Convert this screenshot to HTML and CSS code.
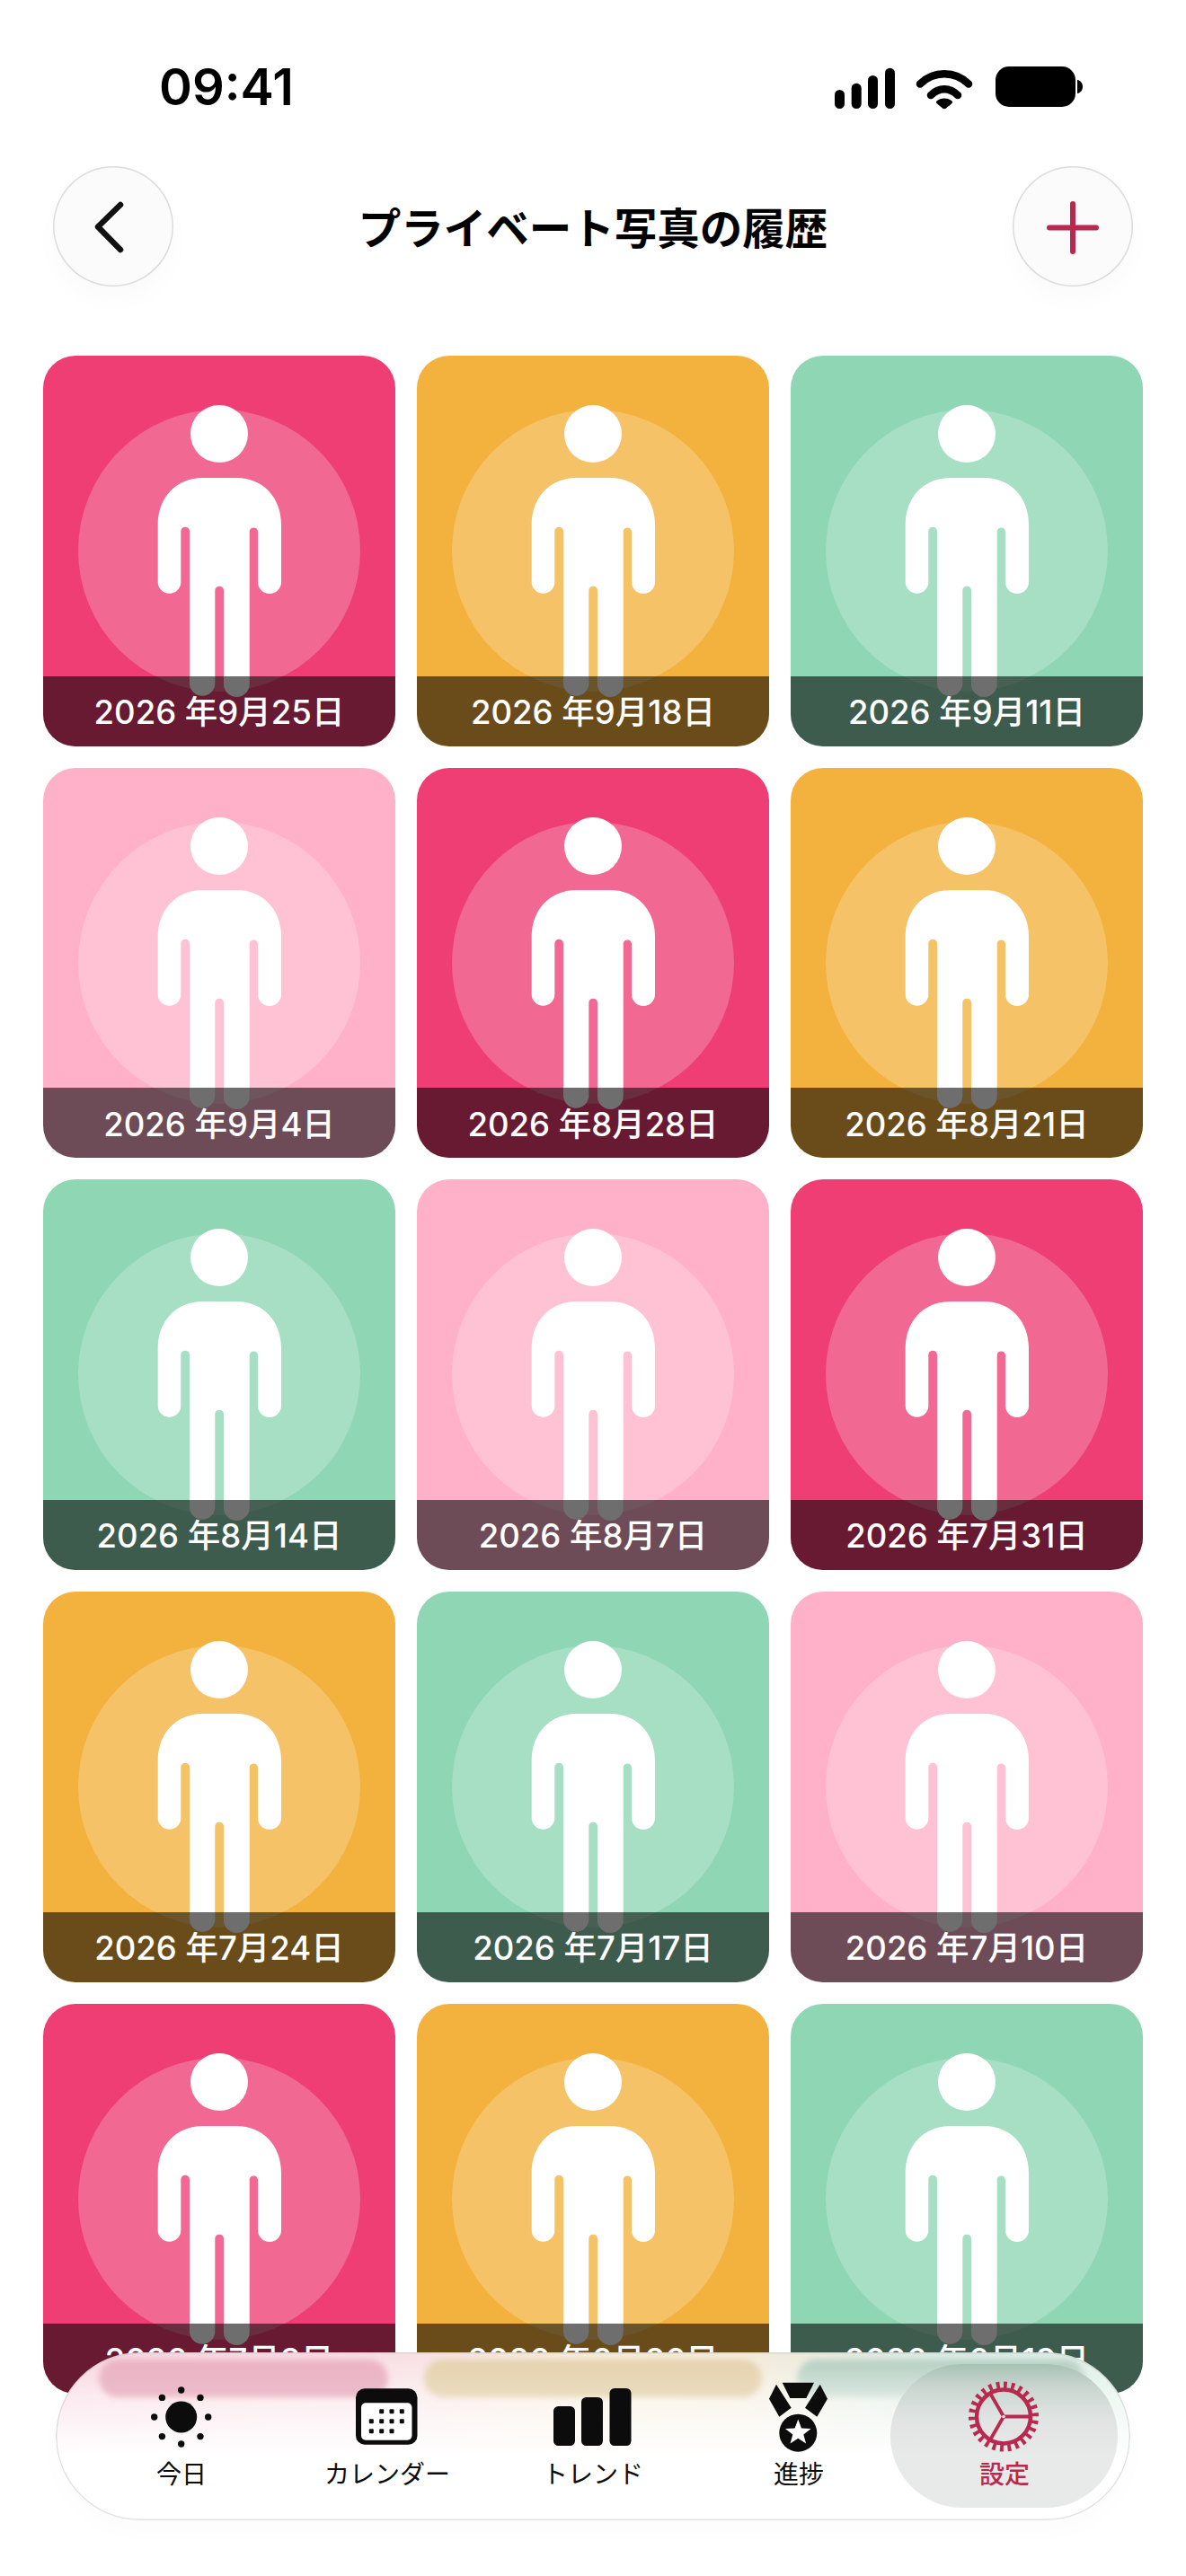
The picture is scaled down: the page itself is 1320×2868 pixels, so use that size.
FILE: index.html
```html
<!DOCTYPE html>
<html lang="ja">
<head>
  <meta charset="UTF-8" />
  <meta name="viewport" content="width=device-width, initial-scale=1.0"/>
  <title>プライベート写真の履歴</title>
  <link rel="stylesheet" href="styles.css">
</head>
<body>
  <svg class="defs" width="0" height="0" aria-hidden="true">
    <symbol id="person" viewBox="0 0 392 434">
      <circle cx="196" cy="217" r="157" fill="#fff" fill-opacity="0.22"/>
      <circle cx="196" cy="87" r="32" fill="#fff"/>
      <path fill="#fff" d="M177.700 136H215C245 136 265 158 265 188V252A13 13 0 0 1 239 252V195.500A4.700 4.700 0 0 0 229.700 195.500V365.700A14.300 14.300 0 0 1 201 365.700V261.500A4.800 4.800 0 0 0 191.300 261.500V365.700A14.200 14.200 0 0 1 163 365.700V195.500A4.800 4.800 0 0 0 153.300 195.500V252A12.800 12.800 0 0 1 127.700 252V188C127.700 158 148 136 177.700 136Z"/>
    </symbol>
  </svg>

  <div class="screen">
    <div class="status-bar">
      <span class="clock">09:41</span>
      <svg class="status-icons" width="276" height="46" viewBox="0 0 276 46">
        <rect x="0" y="26" width="11" height="21" rx="5.5"/>
        <rect x="18.7" y="18.7" width="11" height="28.3" rx="5.5"/>
        <rect x="37" y="10" width="11" height="37" rx="5.5"/>
        <rect x="56" y="1.7" width="11" height="45.3" rx="5.5"/>
        <path class="wifi" d="M95 19.5C110 4.5 134 4.5 149 19.5"/>
        <path class="wifi" d="M107 32C116 23 128 23 137 32"/>
        <path d="M113.500 38.500C118 34.500 126 34.500 130.500 38.500C131.500 39.500 131 40.500 130 41.500L124 46.500C122.800 47.500 121.200 47.500 120 46.500L114 41.500C113 40.500 112.500 39.500 113.500 38.500Z"/>
        <rect x="179" y="0" width="89" height="45" rx="15"/>
        <path d="M270 15C274 15.500 276 19 276 22.500C276 26 274 29.500 270 30Z"/>
      </svg>
    </div>

    <header class="top-bar">
      <button class="round-btn" aria-label="戻る">
        <svg width="134" height="134" viewBox="0 0 134 134"><path class="chevron" d="M75 43L50 67.500L75 93"/></svg>
      </button>
      <h1 class="page-title">プライベート写真の履歴</h1>
      <button class="round-btn" aria-label="追加">
        <svg width="134" height="134" viewBox="0 0 134 134"><path class="plus" d="M67 42V95M41 68.500H93"/></svg>
      </button>
    </header>

    <main class="photo-grid">
      <div class="photo pink"><svg class="figure"><use href="#person"/></svg><div class="caption">2026 年9月25日</div></div>
      <div class="photo orange"><svg class="figure"><use href="#person"/></svg><div class="caption">2026 年9月18日</div></div>
      <div class="photo green"><svg class="figure"><use href="#person"/></svg><div class="caption">2026 年9月11日</div></div>
      <div class="photo rose"><svg class="figure"><use href="#person"/></svg><div class="caption">2026 年9月4日</div></div>
      <div class="photo pink"><svg class="figure"><use href="#person"/></svg><div class="caption">2026 年8月28日</div></div>
      <div class="photo orange"><svg class="figure"><use href="#person"/></svg><div class="caption">2026 年8月21日</div></div>
      <div class="photo green"><svg class="figure"><use href="#person"/></svg><div class="caption">2026 年8月14日</div></div>
      <div class="photo rose"><svg class="figure"><use href="#person"/></svg><div class="caption">2026 年8月7日</div></div>
      <div class="photo pink"><svg class="figure"><use href="#person"/></svg><div class="caption">2026 年7月31日</div></div>
      <div class="photo orange"><svg class="figure"><use href="#person"/></svg><div class="caption">2026 年7月24日</div></div>
      <div class="photo green"><svg class="figure"><use href="#person"/></svg><div class="caption">2026 年7月17日</div></div>
      <div class="photo rose"><svg class="figure"><use href="#person"/></svg><div class="caption">2026 年7月10日</div></div>
      <div class="photo pink"><svg class="figure"><use href="#person"/></svg><div class="caption">2026 年7月3日</div></div>
      <div class="photo orange"><svg class="figure"><use href="#person"/></svg><div class="caption">2026 年6月26日</div></div>
      <div class="photo green"><svg class="figure"><use href="#person"/></svg><div class="caption">2026 年6月19日</div></div>
    </main>

    <nav class="tab-bar">
      <div class="blob blob-pink"></div>
      <div class="blob blob-tan"></div>
      <div class="blob blob-green"></div>

      <div class="tab">
        <svg width="88" height="88" viewBox="0 0 88 88">
          <circle cx="43.700" cy="44" r="17.500"/>
          <circle cx="43.700" cy="14" r="3.700"/><circle cx="43.700" cy="74" r="3.700"/>
          <circle cx="13.700" cy="44" r="3.700"/><circle cx="73.700" cy="44" r="3.700"/>
          <circle cx="22.400" cy="22.400" r="3.700"/><circle cx="65" cy="22.400" r="3.700"/>
          <circle cx="22.400" cy="65.600" r="3.700"/><circle cx="65" cy="65.600" r="3.700"/>
        </svg>
        <span>今日</span>
      </div>

      <div class="tab">
        <svg width="88" height="88" viewBox="0 0 88 88">
          <rect x="9" y="12.300" width="68.500" height="62.500" rx="10"/>
          <rect x="15" y="28.300" width="56.500" height="41.500" rx="5" fill="#fff"/>
          <g class="cal-dots">
            <rect x="35.200" y="35.200" width="5" height="5" rx="1"/><rect x="46.500" y="35.200" width="5" height="5" rx="1"/><rect x="57.800" y="35.200" width="5" height="5" rx="1"/>
            <rect x="23.800" y="46.200" width="5" height="5" rx="1"/><rect x="35.200" y="46.200" width="5" height="5" rx="1"/><rect x="46.500" y="46.200" width="5" height="5" rx="1"/><rect x="57.800" y="46.200" width="5" height="5" rx="1"/>
            <rect x="23.800" y="57.200" width="5" height="5" rx="1"/><rect x="35.200" y="57.200" width="5" height="5" rx="1"/><rect x="46.500" y="57.200" width="5" height="5" rx="1"/>
          </g>
        </svg>
        <span>カレンダー</span>
      </div>

      <div class="tab">
        <svg width="88" height="88" viewBox="0 0 88 88">
          <rect x="0" y="32" width="24" height="44" rx="5.500"/>
          <rect x="31" y="22" width="24" height="54" rx="5.500"/>
          <rect x="62.500" y="12" width="24" height="64" rx="5.500"/>
        </svg>
        <span>トレンド</span>
      </div>

      <div class="tab">
        <svg width="88" height="88" viewBox="0 0 88 88">
          <path d="M25.700 5.700H61L52.300 23H34.300Z"/>
          <path d="M19 7.700L11 23.700L22.300 43.700L35.700 33.700Z"/>
          <path d="M67.700 7.700L76 23.700L64.300 43.700L51 33.700Z"/>
          <circle cx="43.300" cy="61.700" r="21"/>
          <path fill="#fff" d="M43.300 46.500L47 56.400L57.600 56.900L49.300 63.400L52.100 73.600L43.300 67.800L34.500 73.600L37.300 63.400L29 56.900L39.600 56.400Z"/>
        </svg>
        <span>進捗</span>
      </div>

      <div class="tab active">
        <svg width="88" height="88" viewBox="0 0 88 88">
          <circle class="gear-teeth" cx="43" cy="43.500" r="35"/>
          <circle class="gear-ring" cx="43" cy="43.500" r="30"/>
          <path class="gear-spokes" d="M43 43.500H72M43 43.500L28 17.500M43 43.500L28 69.500"/>
          <circle cx="43" cy="43.500" r="1.800" fill="#f3dfe4"/>
        </svg>
        <span>設定</span>
      </div>
    </nav>
  </div>
</body>
</html>
```

FILE: styles.css
```css
* {
  margin: 0;
  padding: 0;
  box-sizing: border-box;
}

body {
  background: #fff;
  font-family: "Noto Sans CJK JP", "Noto Sans", sans-serif;
  color: #0c0c0c;
}

.defs {
  display: block;
  height: 0;
}

.screen {
  position: relative;
  width: 1320px;
  height: 2868px;
  overflow: hidden;
  background: #fff;
}

/* status bar */
.status-bar {
  height: 185px;
  padding: 74px 115px 0 177px;
  display: flex;
  justify-content: space-between;
  align-items: flex-start;
}

.clock {
  font-family: Inter, "Liberation Sans", sans-serif;
  font-size: 56px;
  font-weight: 600;
  line-height: 46px;
  color: #000;
}

.status-icons {
  overflow: visible;
}

.wifi {
  fill: none;
  stroke: #000;
  stroke-width: 8.5;
  stroke-linecap: round;
}

/* header */
.top-bar {
  height: 134px;
  padding: 0 59px;
  margin-bottom: 77px;
  display: flex;
  justify-content: space-between;
  align-items: center;
}

.round-btn {
  width: 134px;
  height: 134px;
  border: none;
  border-radius: 50%;
  background: #fbfbfb;
  box-shadow: inset 0 0 0 1.5px #dcdcdc, 0 16px 30px rgba(0, 0, 0, 0.02);
}

.round-btn svg {
  display: block;
}

.chevron {
  fill: none;
  stroke: #111;
  stroke-width: 6.5;
  stroke-linecap: round;
  stroke-linejoin: round;
}

.plus {
  fill: none;
  stroke: #b8294f;
  stroke-width: 6;
  stroke-linecap: round;
}

.page-title {
  font-size: 47.5px;
  font-weight: 700;
  line-height: 60px;
  color: #000;
}

/* photo grid */
.photo-grid {
  padding: 0 48px;
  display: grid;
  grid-template-columns: repeat(3, 392px);
  grid-auto-rows: 434.67px;
  gap: 24px;
}

.photo {
  position: relative;
  overflow: hidden;
  border-radius: 36px;
}

.pink { background: #ee3e74; }
.orange { background: #f3b13d; }
.green { background: #8ed6b4; }
.rose { background: #ffb1c9; }

.figure {
  display: block;
  width: 392px;
  height: 434px;
}

.caption {
  position: absolute;
  left: 0;
  right: 0;
  bottom: 0;
  height: 78px;
  padding-bottom: 2px;
  display: flex;
  align-items: center;
  justify-content: center;
  background: rgba(0, 0, 0, 0.57);
  color: #fff;
  font-family: Inter, "Noto Sans CJK JP", sans-serif;
  font-size: 36.5px;
  font-weight: 500;
  white-space: pre;
}

/* glass tab bar */
.tab-bar {
  position: absolute;
  left: 62px;
  top: 2619px;
  width: 1196px;
  height: 187px;
  padding: 28px 25.5px 0;
  display: grid;
  grid-template-columns: repeat(5, 229px);
  border-radius: 93.5px;
  overflow: hidden;
  background:
    linear-gradient(to bottom, rgba(255, 255, 255, 0) 0, rgba(255, 255, 255, 0.55) 50px, #fff 115px),
    linear-gradient(to right, #f8d2de 0, #f8dde4 30%, #f6ebd6 50%, #f3ead8 65%, #d8ebe2 82%, #dcefe6 100%);
  box-shadow: inset 0 0 0 1.5px rgba(200, 200, 200, 0.55), 0 12px 30px rgba(0, 0, 0, 0.015);
}

.blob {
  position: absolute;
  top: 8px;
  height: 42px;
  border-radius: 21px;
  filter: blur(3px);
}

.blob-pink {
  left: 48px;
  width: 322px;
  background: linear-gradient(to bottom, #ecb3c4, #ebbccb);
}

.blob-tan {
  left: 410px;
  width: 376px;
  background: linear-gradient(to bottom, #e6d2ae, #eadcc0);
}

.blob-green {
  left: 825px;
  width: 320px;
  background: linear-gradient(to bottom, #b6cfc3, #dbe8e1);
}

.tab {
  position: relative;
  display: flex;
  flex-direction: column;
  align-items: center;
  font-size: 28px;
  line-height: 40px;
}

.tab svg {
  position: relative;
  display: block;
  fill: #0c0c0c;
  overflow: visible;
}

.tab span {
  position: relative;
  margin-top: -2px;
  white-space: nowrap;
}

.cal-dots {
  fill: #0c0c0c;
}

.tab.active {
  color: #b8294f;
  font-weight: 500;
}

.tab.active::before {
  content: "";
  position: absolute;
  left: -12.5px;
  top: -15px;
  width: 253px;
  height: 160px;
  border-radius: 80px;
  background: linear-gradient(to bottom, #a9c1b5 0, #c9d6cf 26px, #dfe3e2 58px, #e8e9e9 100px);
}

.gear-teeth {
  fill: none;
  stroke: #b8294f;
  stroke-width: 8;
  stroke-dasharray: 3.800 4.658;
  transform: rotate(-90deg);
  transform-origin: 43px 43.500px;
}

.gear-ring {
  fill: none;
  stroke: #b8294f;
  stroke-width: 4.500;
}

.gear-spokes {
  fill: none;
  stroke: #b8294f;
  stroke-width: 3.800;
}
```
